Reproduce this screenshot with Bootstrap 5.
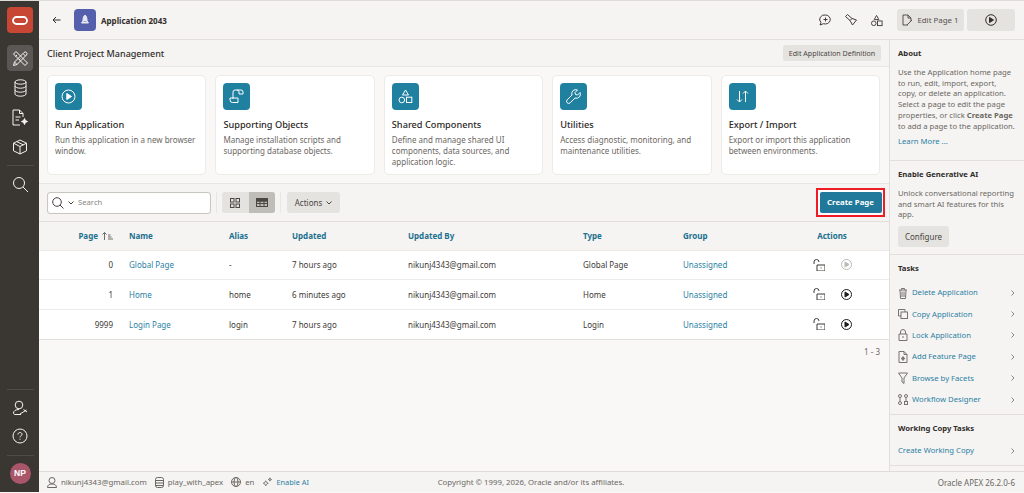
<!DOCTYPE html>
<html lang="en">
<head>
<meta charset="utf-8">
<title>Application 2043</title>
<link href="https://cdn.jsdelivr.net/npm/bootstrap@5.3.0/dist/css/bootstrap.min.css" rel="stylesheet">
<style>
html,body{height:493px;overflow:hidden}
body{font-family:"Noto Sans","Open Sans",sans-serif;font-size:8px;color:#312d2a;background:#f9f8f7;line-height:11px}
svg{fill:none;stroke:currentColor;stroke-width:1;flex:none;display:block}
a{text-decoration:none;color:#2b7fa3}
.shell{height:492px;border-top:1px solid #dfdcd8;background:#f9f8f7}
.rail{width:39px;background:#3a3632;color:#f5f4f2;padding:6px 0 8px 1px;flex:none}
.rail-item{width:26px;height:26px;border-radius:4px;margin:0 auto}
.logo-box{background:#c74634;margin-bottom:12px}
.active-box{background:#5b5754;margin-bottom:4px}
.gap3{margin-bottom:3px}
.gap4{margin-bottom:4px}
.gap2{margin-bottom:2px}
.rail-sep{width:27px;height:1px;background:#4f4b47;margin:5px auto}
.rail-sep-last{margin:6px auto 7px}
.avatar{width:21px;height:21px;border-radius:50%;background:#a9566b;color:#fff;font-weight:700;font-size:8.5px;margin:0 auto;font-family:"Liberation Sans",sans-serif}
.head-bar{height:39px;background:#f5f4f2;border-bottom:1px solid #e2dfdb;padding:0 9px 0 13px}
.app-ico{width:22px;height:22px;background:#5560ad;border-radius:4px;color:#e6e7f4;margin:0 5px 0 13px}
.app-title{font-size:8px;font-weight:700}
.tool-ico{color:#3f3b38}
.top-ico{margin-right:13px}
.top-ico-last{margin-right:14px}
.gbtn{background:#e5e3df;border-radius:3px;color:#4a4642;border:0;white-space:nowrap}
.edit-btn{width:67px;height:22px;font-size:7.9px;color:#55514e;padding:0}
.run-btn{width:48px;height:22px;margin-left:3px;color:#312d2a;padding:0}
.main-col{width:850px;flex:none}
.title-bar{height:27px;background:#f5f4f2;border-bottom:1px solid #e8e6e3;padding:0 8px}
.app-name{font-size:9px;font-weight:500}
.def-btn{height:16px;width:98px;padding:0;font-size:7.1px;color:#4a4642}
.cards-area{height:117px;padding:8px 9px 9px 8px;gap:9px;border-bottom:1px solid #e8e6e3;background:#f9f8f7}
.tile{flex:1 1 0;height:100px;background:#fff;border:1px solid #ecebe8;border-radius:5px;padding:7px}
.tile-ico{width:27px;height:27px;background:#20809f;border-radius:4px;color:#fff;margin-bottom:8px}
.tile-title{font-size:9.2px;line-height:13px;font-weight:500;margin-bottom:3px;color:#2b2826}
.tile-text{font-size:8px;line-height:11px;color:#6b6763}
.tool-bar{height:38px;background:#f5f4f2;border-bottom:1px solid #e2dfdb;padding:0 4px 0 8px}
.search-box{width:164px;height:22px;background:#fff;border:1px solid #c9c6c1;border-radius:3px;color:#45413e;padding-left:4px;box-shadow:inset 0 0 1px #ddd}
.search-ph{color:#8a8682;margin-left:4px;font-size:7.7px}
.vsep{width:1px;height:21px;background:#e8e6e3;margin:0 5px}
.seg{height:21px;width:53px;background:#e5e3df;border-radius:3px;overflow:hidden;color:#4a4642}
.seg>div{flex:1}
.seg-on{background:#bfbdb8}
.act-btn{width:53px;height:21px;font-size:8px;padding:0;margin-left:1px}
.create-frame{border:2px solid #ee1c25;padding:2px 1.5px;background:#fff}
.create-btn{width:62px;height:21px;background:#20789a;color:#fff;font-weight:700;font-size:7.8px;border:0;border-radius:2px;padding:0}
.pages{table-layout:fixed;width:850px;margin:0;font-size:8px;--bs-table-bg:transparent;--bs-table-color:#3d3936;color:#3d3936}
.pages th,.pages td{padding:0 8px;vertical-align:middle;white-space:nowrap;border-bottom:1px solid #ecebe8}
.pages th{height:28px;background:#f5f4f2;color:#20708f;font-weight:700;border-bottom:1px solid #ecebe8}
.pages td{height:30px;background:#fff}
.pages tbody tr:first-child td{height:29px}
.pages tr:last-child td{border-bottom-color:#e2dfdb}
.sort-ico{color:#706c68}
.pager{color:#6b6763;padding:6px 9px 0 0;text-align:right}
.side-col{width:135px;flex:none;background:#f5f4f2;border-left:1px solid #e2dfdb;overflow:hidden;font-size:7.7px}
.side-sec{padding:8px 8px 0 8px;border-bottom:1px solid #e2dfdb;color:#6b6763}
.sec-about{height:121px}
.sec-ai{height:94px}
.sec-tasks{height:160px}
.sec-copy{height:51px}
.side-h{font-weight:700;color:#312d2a;margin-bottom:8px;line-height:11px}
.side-hb{margin-bottom:6px}
.side-sec p{margin:0;line-height:10.7px}
.learn{margin-top:5px}
.cfg-btn{width:51px;height:21px;font-size:8px;margin-top:6px;padding:0}
.task{height:21.4px;color:#2b7fa3}
.task svg{color:#77736f}
.task .chev{margin-left:auto;color:#8a8682;margin-right:1px}
.task-label{margin-left:4px}
.foot{height:21px;background:#f5f4f2;border-top:1px solid #dfdcd8;padding:0 9px 0 8px;color:#6b6763;font-size:7.8px;display:grid;grid-template-columns:1fr auto 1fr;align-items:center}
.foot-left svg{color:#6b6763}
.foot-ai{font-size:7.4px}
.foot-right{text-align:right;font-size:8px}
</style>
</head>
<body>
<div class="shell d-flex">
  <nav class="rail d-flex flex-column align-items-center">
    <div class="rail-item logo-box d-flex align-items-center justify-content-center">
      <svg width="18" height="11" viewBox="0 0 18 11"><rect x="2" y="2" width="14" height="7" rx="3.5" stroke-width="1.8" stroke="#fff"/></svg>
    </div>
    <div class="rail-item active-box d-flex align-items-center justify-content-center">
      <svg width="17" height="17" viewBox="0 0 17 17" stroke-width="1.100"><path d="M1.500 15.500l1-3.500L12 2.500a1.700 1.700 0 0 1 2.500 2.500L5 14.500zM2.500 12L5 14.500M11 3.500L13.500 6"/><path d="M1.500 4L4 1.500l11.500 11.500-2.500 2.500zM3.500 6.500l1.500-1.500M7 10l1.500-1.500"/></svg>
    </div>
    <div class="rail-item gap3 d-flex align-items-center justify-content-center">
      <svg width="13" height="18" viewBox="0 0 13 18" stroke-width="1.100"><ellipse cx="6.500" cy="3" rx="5.500" ry="2.200"/><path d="M1 3v12c0 1.200 2.500 2.200 5.500 2.200s5.500-1 5.500-2.200V3M1 7c0 1.200 2.500 2.200 5.500 2.200S12 8.200 12 7M1 11c0 1.200 2.500 2.200 5.500 2.200S12 12.200 12 11"/></svg>
    </div>
    <div class="rail-item gap4 d-flex align-items-center justify-content-center">
      <svg width="16" height="17" viewBox="0 0 16 17" stroke-width="1.100"><path d="M8 16H1V1h6.500L11 4.500V8M7.500 1v3.500H11M3.500 8h5M3.500 11h3.500"/><path d="M12.500 9.500l.9 2.100 2.100.9-2.100.9-.9 2.100-.9-2.100-2.100-.9 2.100-.9z" fill="currentColor"/></svg>
    </div>
    <div class="rail-item d-flex align-items-center justify-content-center">
      <svg width="16" height="16" viewBox="0 0 16 16" stroke-width="1.100"><path d="M8 1l6.500 3.200v7.600L8 15l-6.500-3.200V4.200zM1.500 4.200L8 7.500l6.500-3.300M8 7.500V15M4.800 2.600l6.500 3.300"/></svg>
    </div>
    <div class="rail-sep"></div>
    <div class="rail-item d-flex align-items-center justify-content-center">
      <svg width="17" height="17" viewBox="0 0 17 17" stroke-width="1.200"><circle cx="7" cy="7" r="5.500"/><path d="M11 11l5 5"/></svg>
    </div>
    <div class="rail-sep mt-auto"></div>
    <div class="rail-item gap2 d-flex align-items-center justify-content-center">
      <svg width="16" height="16" viewBox="0 0 16 16" stroke-width="1.100"><circle cx="7" cy="5" r="3.800"/><path d="M7 9.500c-3.500 0-5.500 1.500-5.500 3.500 0 1 .7 1.500 1.500 1.500h6M8 14l6.500-4M11.500 9.500l3.500 2.500"/></svg>
    </div>
    <div class="rail-item d-flex align-items-center justify-content-center">
      <svg width="16" height="16" viewBox="0 0 16 16" stroke-width="1.100"><circle cx="8" cy="8" r="7"/><path d="M6 6.500C6 5.200 7 4.500 8 4.500s2 .7 2 1.800c0 1.500-2 1.500-2 3M8 10.700v1"/></svg>
    </div>
    <div class="rail-sep rail-sep-last"></div>
    <div class="avatar d-flex align-items-center justify-content-center">NP</div>
  </nav>

  <div class="flex-grow-1 d-flex flex-column" style="min-width:0">
    <header class="head-bar d-flex align-items-center">
      <svg width="9" height="8" viewBox="0 0 9 8" stroke-width="1.2"><path d="M8.500 4H1M4 1L1 4l3 3"/></svg>
      <div class="app-ico d-flex align-items-center justify-content-center">
        <svg width="10" height="12" viewBox="0 0 10 12"><path d="M5 1c1.500 1 2 3 2 5v2H3V6c0-2 .5-4 2-5zM3 7L1.500 9h7L7 7" fill="currentColor"/></svg>
      </div>
      <div class="app-title">Application 2043</div>
      <div class="ms-auto d-flex align-items-center tool-ico">
        <svg class="top-ico" width="13" height="12" viewBox="0 0 13 12"><path d="M6.500 1a5 4.500 0 1 1-2 8.700L1 11l1-2.500A5 4.500 0 0 1 6.500 1zM6.500 3.500v4M4.500 5.500h4"/></svg>
        <svg class="top-ico" width="13" height="12" viewBox="0 0 13 12"><path d="M2.500.5L7 4.500 11.500 6 7.500 11 5 6.500 .5 2.500zM5 6.500L7 4.500"/></svg>
        <svg class="top-ico-last" width="12" height="13" viewBox="0 0 13 13"><path d="M6 1l2.500 4.500h-5z"/><circle cx="3" cy="9.500" r="2.500"/><rect x="7" y="7" width="5" height="5"/></svg>
        <button class="gbtn edit-btn d-flex align-items-center justify-content-center gap-1">
          <svg width="11" height="12" viewBox="0 0 11 12"><path d="M6 11H1V1h5l3 3v3M6 1v3h3M5 11l5-5"/></svg>Edit Page 1</button>
        <button class="gbtn run-btn d-flex align-items-center justify-content-center">
          <svg width="12" height="12" viewBox="0 0 12 12"><circle cx="6" cy="6" r="5.300"/><path d="M4.500 3.500L8.500 6l-4 2.500z" fill="currentColor"/></svg></button>
      </div>
    </header>

    <div class="d-flex flex-grow-1" style="min-height:0">
      <main class="main-col d-flex flex-column">
        <div class="title-bar d-flex align-items-center justify-content-between">
          <div class="app-name">Client Project Management</div>
          <button class="gbtn def-btn">Edit Application Definition</button>
        </div>
        <div class="cards-area d-flex">
          <div class="tile">
            <div class="tile-ico d-flex align-items-center justify-content-center"><svg width="15" height="15" viewBox="0 0 15 15" stroke-width="1.200"><circle cx="7.500" cy="7.500" r="6.500"/><path d="M5.800 4.500L10.500 7.500l-4.700 3z" fill="currentColor"/></svg></div>
            <div class="tile-title">Run Application</div>
            <div class="tile-text">Run this application in a new browser window.</div>
          </div>
          <div class="tile">
            <div class="tile-ico d-flex align-items-center justify-content-center"><svg width="15" height="15" viewBox="0 0 15 15" stroke-width="1.100"><path d="M4 10V3a2 2 0 0 1 2-2h6a2 2 0 0 1 2 2v2h-4V3a2 2 0 0 0-2-2M9 10V9H1v2a2.500 2.500 0 0 0 2.500 2.500H9V10z"/></svg></div>
            <div class="tile-title">Supporting Objects</div>
            <div class="tile-text">Manage installation scripts and supporting database objects.</div>
          </div>
          <div class="tile">
            <div class="tile-ico d-flex align-items-center justify-content-center"><svg width="15" height="15" viewBox="0 0 15 15"><path d="M7.500 1l3 5h-6z"/><circle cx="3.800" cy="11" r="2.800"/><rect x="8.500" y="8.200" width="5.300" height="5.300"/></svg></div>
            <div class="tile-title">Shared Components</div>
            <div class="tile-text">Define and manage shared UI components, data sources, and application logic.</div>
          </div>
          <div class="tile">
            <div class="tile-ico d-flex align-items-center justify-content-center"><svg width="15" height="15" viewBox="0 0 15 15" stroke-width="1.100"><path d="M14 3.500l-2.500 2.500L9.500 5.500 9 3.500 11.500 1A4 4 0 0 0 6 6L1.200 10.800a1.900 1.900 0 0 0 3 3L9 9a4 4 0 0 0 5-5.500z"/></svg></div>
            <div class="tile-title">Utilities</div>
            <div class="tile-text">Access diagnostic, monitoring, and maintenance utilities.</div>
          </div>
          <div class="tile">
            <div class="tile-ico d-flex align-items-center justify-content-center"><svg width="15" height="15" viewBox="0 0 15 15" stroke-width="1.200"><path d="M4.500 2v11M2 10.500L4.500 13 7 10.500M10.500 13V2M8 4.500L10.500 2 13 4.500"/></svg></div>
            <div class="tile-title">Export / Import</div>
            <div class="tile-text">Export or import this application between environments.</div>
          </div>
        </div>
        <div class="tool-bar d-flex align-items-center">
          <div class="search-box d-flex align-items-center">
            <svg width="12" height="12" viewBox="0 0 12 12"><circle cx="5" cy="5" r="4.300"/><path d="M8 8l3.500 3.500"/></svg>
            <svg class="ms-1" width="6" height="4" viewBox="0 0 6 4"><path d="M.500.500L3 3 5.500.500"/></svg>
            <span class="search-ph">Search</span>
          </div>
          <div class="vsep"></div>
          <div class="seg d-flex">
            <div class="d-flex align-items-center justify-content-center"><svg width="10" height="10" viewBox="0 0 10 10"><rect x=".5" y=".5" width="3.500" height="3.500"/><rect x="6" y=".5" width="3.500" height="3.500"/><rect x=".5" y="6" width="3.500" height="3.500"/><rect x="6" y="6" width="3.500" height="3.500"/></svg></div>
            <div class="seg-on d-flex align-items-center justify-content-center"><svg width="12" height="9" viewBox="0 0 12 9"><rect x=".5" y=".5" width="11" height="8"/><path d="M.5 3h11M.5 5.500h11M4 3v5.500M8 3v5.500" /><rect x=".5" y=".5" width="11" height="2.500" fill="currentColor"/></svg></div>
          </div>
          <div class="vsep"></div>
          <button class="gbtn act-btn d-flex align-items-center justify-content-center gap-1">Actions<svg width="6" height="4" viewBox="0 0 6 4"><path d="M.500.500L3 3 5.500.500"/></svg></button>
          <div class="create-frame ms-auto"><button class="create-btn d-block">Create Page</button></div>
        </div>
        <table class="table pages">
          <colgroup><col style="width:82px"><col style="width:100px"><col style="width:63px"><col style="width:116px"><col style="width:175px"><col style="width:100px"><col style="width:100px"><col style="width:114px"></colgroup>
          <thead><tr>
            <th class="text-end"><span class="d-inline-flex align-items-center gap-1">Page<svg class="sort-ico" width="11" height="8" viewBox="0 0 11 8" stroke-width=".8"><path d="M2.500 8V.500M.5 2.500l2-2 2 2M6 3h2.500M6 5h3.500M6 7h5"/></svg></span></th>
            <th>Name</th><th>Alias</th><th>Updated</th><th>Updated By</th><th>Type</th><th>Group</th><th class="text-center">Actions</th>
          </tr></thead>
          <tbody>
            <tr><td class="text-end">0</td><td><a href="#">Global Page</a></td><td>-</td><td>7 hours ago</td><td>nikunj4343@gmail.com</td><td>Global Page</td><td><a href="#">Unassigned</a></td>
              <td><div class="d-flex justify-content-center align-items-center gap-3"><svg width="12" height="12" viewBox="0 0 12 12"><path d="M1 5V3a2.500 2.500 0 0 1 5 0M4 6h8v6H4zM8 8.500v1"/></svg><svg width="11" height="11" viewBox="0 0 11 11" color="#bdbab6"><circle cx="5.500" cy="5.500" r="5"/><path d="M4 3l4 2.500L4 8z" fill="currentColor"/></svg></div></td></tr>
            <tr><td class="text-end">1</td><td><a href="#">Home</a></td><td>home</td><td>6 minutes ago</td><td>nikunj4343@gmail.com</td><td>Home</td><td><a href="#">Unassigned</a></td>
              <td><div class="d-flex justify-content-center align-items-center gap-3"><svg width="12" height="12" viewBox="0 0 12 12"><path d="M1 5V3a2.500 2.500 0 0 1 5 0M4 6h8v6H4zM8 8.500v1"/></svg><svg width="11" height="11" viewBox="0 0 11 11" color="#1f1c1a"><circle cx="5.500" cy="5.500" r="5"/><path d="M4 3l4 2.500L4 8z" fill="currentColor"/></svg></div></td></tr>
            <tr><td class="text-end">9999</td><td><a href="#">Login Page</a></td><td>login</td><td>7 hours ago</td><td>nikunj4343@gmail.com</td><td>Login</td><td><a href="#">Unassigned</a></td>
              <td><div class="d-flex justify-content-center align-items-center gap-3"><svg width="12" height="12" viewBox="0 0 12 12"><path d="M1 5V3a2.500 2.500 0 0 1 5 0M4 6h8v6H4zM8 8.500v1"/></svg><svg width="11" height="11" viewBox="0 0 11 11" color="#1f1c1a"><circle cx="5.500" cy="5.500" r="5"/><path d="M4 3l4 2.500L4 8z" fill="currentColor"/></svg></div></td></tr>
          </tbody>
        </table>
        <div class="pager">1 - 3</div>
      </main>

      <aside class="side-col">
        <div class="side-sec sec-about">
          <div class="side-h">About</div>
          <p>Use the Application home page to run, edit, import, export, copy, or delete an application. Select a page to edit the page properties, or click <b>Create Page</b> to add a page to the application.</p>
          <div class="learn"><a href="#">Learn More ...</a></div>
        </div>
        <div class="side-sec sec-ai">
          <div class="side-h">Enable Generative AI</div>
          <p>Unlock conversational reporting and smart AI features for this app.</p>
          <button class="gbtn cfg-btn">Configure</button>
        </div>
        <div class="side-sec sec-tasks">
          <div class="side-h">Tasks</div>
          <div class="task d-flex align-items-center"><svg width="10" height="12" viewBox="0 0 10 12"><path d="M1 3h8M3.500 3V1.500h3V3M2 3l.5 8.500h5L8 3M4 4.500v5.500M6 4.500v5.500"/></svg><a class="task-label" href="#">Delete Application</a><svg class="chev" width="4" height="6" viewBox="0 0 4 6"><path d="M.5.500L3 3 .5 5.500"/></svg></div>
          <div class="task d-flex align-items-center"><svg width="10" height="10" viewBox="0 0 10 10"><rect x="3" y="3" width="6.500" height="6.500"/><path d="M3 7H.5V.5H7V3"/></svg><a class="task-label" href="#">Copy Application</a><svg class="chev" width="4" height="6" viewBox="0 0 4 6"><path d="M.5.500L3 3 .5 5.500"/></svg></div>
          <div class="task d-flex align-items-center"><svg width="10" height="12" viewBox="0 0 10 12"><path d="M1 5h8v6.500H1zM2.500 5V3a2.500 2.500 0 0 1 5 0v2M4 8h2"/></svg><a class="task-label" href="#">Lock Application</a><svg class="chev" width="4" height="6" viewBox="0 0 4 6"><path d="M.5.500L3 3 .5 5.500"/></svg></div>
          <div class="task d-flex align-items-center"><svg width="10" height="12" viewBox="0 0 10 12"><path d="M1 .5h5l3 3v8H1zM6 .5v3h3"/><path d="M5 5.500l.6 1.400 1.400.6-1.400.6L5 9.500l-.6-1.400L3 7.500l1.400-.6z" fill="currentColor"/></svg><a class="task-label" href="#">Add Feature Page</a><svg class="chev" width="4" height="6" viewBox="0 0 4 6"><path d="M.5.500L3 3 .5 5.500"/></svg></div>
          <div class="task d-flex align-items-center"><svg width="10" height="12" viewBox="0 0 10 12"><path d="M.5 1h9L6 6v5.500L4 10V6z"/></svg><a class="task-label" href="#">Browse by Facets</a><svg class="chev" width="4" height="6" viewBox="0 0 4 6"><path d="M.5.500L3 3 .5 5.500"/></svg></div>
          <div class="task d-flex align-items-center"><svg width="10" height="11" viewBox="0 0 10 11"><circle cx="2" cy="2" r="1.500"/><circle cx="8" cy="2" r="1.500"/><circle cx="2" cy="9" r="1.500"/><rect x="6.500" y="7.500" width="3" height="3"/><path d="M2 3.500v4M8 3.500v4"/></svg><a class="task-label" href="#">Workflow Designer</a><svg class="chev" width="4" height="6" viewBox="0 0 4 6"><path d="M.5.500L3 3 .5 5.500"/></svg></div>
        </div>
        <div class="side-sec sec-copy">
          <div class="side-h side-hb">Working Copy Tasks</div>
          <div class="task d-flex align-items-center"><a href="#">Create Working Copy</a><svg class="chev" width="4" height="6" viewBox="0 0 4 6"><path d="M.5.500L3 3 .5 5.500"/></svg></div>
        </div>
      </aside>
    </div>

    <footer class="foot">
      <div class="foot-left d-flex align-items-center">
        <svg width="10" height="11" viewBox="0 0 10 11"><circle cx="5" cy="3.500" r="3"/><path d="M.5 10.500c0-2.500 2-3.500 4.500-3.500s4.500 1 4.500 3.500z"/></svg>
        <span class="ms-1">nikunj4343@gmail.com</span>
        <svg class="ms-2" width="9" height="11" viewBox="0 0 9 11"><rect x=".5" y=".5" width="8" height="10" rx="2"/><path d="M.5 3.500h8M.5 6h8M.5 8.500h8"/></svg>
        <span class="ms-1">play_with_apex</span>
        <svg class="ms-2" width="10" height="10" viewBox="0 0 10 10"><circle cx="5" cy="5" r="4.500"/><ellipse cx="5" cy="5" rx="2" ry="4.500"/><path d="M.5 5h9"/></svg>
        <span class="ms-1">en</span>
        <svg class="ms-2" width="10" height="10" viewBox="0 0 12 11"><path d="M4.500 4l1 2 2 1-2 1-1 2-1-2-2-1 2-1zM9.500.5l.5 1.500 1.500.5-1.500.5-.5 1.500L9 3 7.500 2.500 9 2z"/></svg>
        <a class="ms-1 foot-ai" href="#">Enable AI</a>
      </div>
      <div class="foot-copy">Copyright © 1999, 2026, Oracle and/or its affiliates.</div>
      <div class="foot-right">Oracle APEX 26.2.0-6</div>
    </footer>
  </div>
</div>
</body>
</html>
